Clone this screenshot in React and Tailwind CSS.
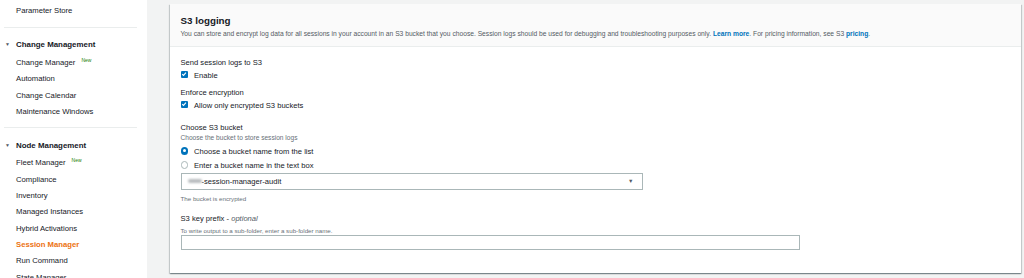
import React from "react";

const font = { fontFamily: '"Liberation Sans", Arial, sans-serif' };

function NavItem({ children, active, badge }) {
  return (
    <div
      className={`h-[16.35px] pt-[2px] flex items-center pl-[16px] text-[7.7px] ${
        active ? "text-[#ec7211] font-bold" : "text-[#16191f]"
      }`}
    >
      <span>{children}</span>
      {badge && (
        <span className="ml-[6px] -mt-[5px] text-[5px] text-[#1d8102]">New</span>
      )}
    </div>
  );
}

function NavHeader({ children, mb }) {
  return (
    <div className={`h-[16.6px] pt-[2px] ${mb} flex items-center text-[7.9px] font-bold text-[#16191f]`}>
      <span className="w-[16px] pl-[5px] text-[5px] text-[#545b64]">▼</span>
      <span>{children}</span>
    </div>
  );
}

function Checkbox() {
  return (
    <span className="w-[7px] h-[7px] rounded-[1px] bg-[#0073bb] flex items-center justify-center">
      <svg width="6" height="6" viewBox="0 0 10 10">
        <path d="M2 5.2 L4.2 7.4 L8.2 2.6" fill="none" stroke="white" strokeWidth="1.8" />
      </svg>
    </span>
  );
}

function Radio({ checked }) {
  return checked ? (
    <span className="w-[7.5px] h-[7.5px] rounded-full bg-[#0073bb] flex items-center justify-center">
      <span className="w-[3px] h-[3px] rounded-full bg-white" />
    </span>
  ) : (
    <span className="w-[7.5px] h-[7.5px] rounded-full border border-[#aab7b8] bg-white" />
  );
}

export default function App() {
  return (
    <div style={font} className="w-[1024px] h-[278px] flex overflow-hidden bg-[#f2f3f3]">
      {/* Sidebar */}
      <div className="w-[147px] h-full bg-white pt-[2px] shrink-0 overflow-hidden">
        <NavItem>Parameter Store</NavItem>
        <div className="ml-[4px] w-[133px] h-px bg-[#eaeded] mt-[8.9px] mb-[7.7px]" />
        <NavHeader mb="mb-[1.2px]">Change Management</NavHeader>
        <NavItem badge>Change Manager</NavItem>
        <NavItem>Automation</NavItem>
        <NavItem>Change Calendar</NavItem>
        <NavItem>Maintenance Windows</NavItem>
        <div className="ml-[4px] w-[133px] h-px bg-[#eaeded] mt-[8.3px] mb-[8.3px]" />
        <NavHeader mb="mb-[0.5px]">Node Management</NavHeader>
        <NavItem badge>Fleet Manager</NavItem>
        <NavItem>Compliance</NavItem>
        <NavItem>Inventory</NavItem>
        <NavItem>Managed Instances</NavItem>
        <NavItem>Hybrid Activations</NavItem>
        <NavItem active>Session Manager</NavItem>
        <NavItem>Run Command</NavItem>
        <NavItem>State Manager</NavItem>
      </div>

      {/* Main */}
      <div className="flex-1 pl-[23px] pr-[3px] pt-[4px]">
        <div className="w-[851px] h-[269px] bg-white shadow-[0_1px_1px_0_rgba(0,28,36,0.3),1px_1px_1px_0_rgba(0,28,36,0.15),-1px_1px_1px_0_rgba(0,28,36,0.15)] flex flex-col">
          {/* Header */}
          <div className="h-[43px] shrink-0 bg-[#fafafa] border-b border-[#eaeded] px-[10.5px] pt-[9.5px]">
            <div className="h-[14px] pt-[1px] flex items-center text-[9.8px] font-bold text-[#16191f]">
              S3 logging
            </div>
            <div className="h-[10px] pt-[2px] mt-[0.5px] flex items-center text-[6.7px] text-[#545b64] whitespace-nowrap">
              <span>
                You can store and encrypt log data for all sessions in your account in an S3 bucket that you choose. Session logs should be used for debugging and troubleshooting purposes only.{" "}
                <span className="font-bold text-[#0073bb]">Learn more</span>. For pricing information, see S3{" "}
                <span className="font-bold text-[#0073bb]">pricing</span>.
              </span>
            </div>
          </div>

          {/* Body */}
          <div className="flex flex-col px-[10.5px] pt-[8.3px]">
            <div className="h-[12px] pt-[2px] flex items-center text-[7.6px] text-[#16191f]">
              Send session logs to S3
            </div>
            <div className="h-[12px] mt-[1px] flex items-center gap-[6.5px] text-[7.6px] text-[#16191f]">
              <Checkbox />
              <span className="pt-[2px]">Enable</span>
            </div>
            <div className="h-[12px] pt-[2px] mt-[5px] flex items-center text-[7.6px] text-[#16191f]">
              Enforce encryption
            </div>
            <div className="h-[12px] mt-[1px] flex items-center gap-[6.5px] text-[7.6px] text-[#16191f]">
              <Checkbox />
              <span className="pt-[2px]">Allow only encrypted S3 buckets</span>
            </div>
            <div className="h-[12px] pt-[2px] mt-[10.7px] flex items-center text-[7.6px] text-[#16191f]">
              Choose S3 bucket
            </div>
            <div className="h-[8px] pt-[2px] flex items-center text-[6.6px] text-[#687078]">
              Choose the bucket to store session logs
            </div>
            <div className="h-[12px] mt-[4px] flex items-center gap-[6px] text-[7.6px] text-[#16191f]">
              <Radio checked />
              <span className="pt-[2px]">Choose a bucket name from the list</span>
            </div>
            <div className="h-[12px] mt-[2px] flex items-center gap-[6px] text-[7.6px] text-[#16191f]">
              <Radio />
              <span className="pt-[2px]">Enter a bucket name in the text box</span>
            </div>
            <div className="w-[462px] h-[16.4px] mt-[2.3px] border border-[#aab7b8] bg-white flex items-center pl-[6px] pr-[8px] text-[7.6px] text-[#16191f]">
              <span className="w-[14px] h-[4px] rounded-[2px] bg-[#b8bcbf] blur-[0.8px]" />
              <span className="pt-[1px]">-session-manager-audit</span>
              <span className="ml-auto text-[5.5px] text-[#545b64]">▼</span>
            </div>
            <div className="h-[8px] pt-[2px] mt-[3.6px] flex items-center text-[6.2px] text-[#687078]">
              The bucket is encrypted
            </div>
            <div className="h-[12px] pt-[2px] mt-[10.4px] flex items-center text-[7.6px] text-[#16191f]">
              <span>
                S3 key prefix - <i className="text-[#545b64]">optional</i>
              </span>
            </div>
            <div className="h-[8px] pt-[2px] mt-[2px] flex items-center text-[6.2px] text-[#687078]">
              To write output to a sub-folder, enter a sub-folder name.
            </div>
            <div className="w-[619px] h-[15.5px] mt-[1px] border border-[#aab7b8] bg-white" />
          </div>
        </div>
      </div>
    </div>
  );
}
